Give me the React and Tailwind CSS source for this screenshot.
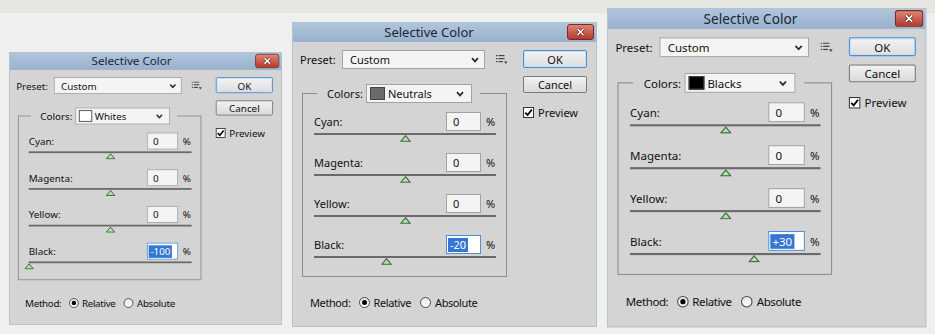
import React from "react";

function Chevron() {
  return (
    <svg width="8" height="6" viewBox="0 0 8 6">
      <path d="M1 1.2 L4 4.4 L7 1.2" fill="none" stroke="#2a2a2a" strokeWidth="1.7" />
    </svg>
  );
}

function ListIcon() {
  return (
    <svg width="12" height="10" viewBox="0 0 12 10">
      <rect x="0" y="0" width="1.5" height="1.2" fill="#444" />
      <rect x="0" y="3" width="1.5" height="1.2" fill="#444" />
      <rect x="0" y="6" width="1.5" height="1.2" fill="#444" />
      <rect x="2.5" y="0" width="6" height="1.2" fill="#444" />
      <rect x="2.5" y="3" width="6" height="1.2" fill="#444" />
      <rect x="2.5" y="6" width="4.5" height="1.2" fill="#444" />
      <path d="M8 6.5 L11.5 6.5 L9.75 9 Z" fill="#444" />
    </svg>
  );
}

function Thumb({ pct }) {
  return (
    <svg
      width="11"
      height="7"
      viewBox="0 0 11 7"
      className="absolute top-[2px]"
      style={{ left: `calc(${pct}% - 5.5px)` }}
    >
      <path d="M5.5 0.7 L10.2 6.3 L0.8 6.3 Z" fill="#b5e0ad" stroke="#3d6b3d" strokeWidth="1.1" />
    </svg>
  );
}

function Row({ label, value, selected }) {
  const num = parseInt(value, 10);
  const pct = (num + 100) / 2;
  return (
    <div className="h-[41px]">
      <div className="flex items-center h-[19px]">
        <span className="flex-1">{label}</span>
        {selected ? (
          <div className="w-[35px] h-[19px] border border-[#4f8fd6] bg-white flex items-center pl-[1px]">
            <span className="bg-[#3476d2] text-white px-[2px] leading-[14px]">{value}</span>
          </div>
        ) : (
          <div className="w-[35px] h-[19px] border border-[#a3a3a3] bg-[#f4f4f4] flex items-center pl-[6px]">
            {value}
          </div>
        )}
        <span className="ml-[5px] w-[10px]">%</span>
      </div>
      <div className="relative mt-[2px] h-[2px] bg-[#6a6a6a]">
        <Thumb pct={pct} />
      </div>
    </div>
  );
}

function Radio({ checked }) {
  return (
    <span className="w-[11px] h-[11px] rounded-full border border-[#4a4a4a] bg-gradient-to-b from-[#e6e6e6] to-white flex items-center justify-center">
      {checked ? <span className="w-[5px] h-[5px] rounded-full bg-black" /> : null}
    </span>
  );
}

function Dialog({ pos, swatch, colorName, black }) {
  return (
    <div
      className={`absolute ${pos} origin-top-left w-[305px] h-[305px] flex flex-col border border-[#b3c2d3] bg-[#d4d4d4] font-['Noto_Sans',sans-serif] text-[11px] text-[#111111] leading-none`}
    >
      <div className="relative h-[19px] shrink-0 bg-gradient-to-b from-[#b1c5dc] to-[#98b1cd] flex items-center">
        <div className="w-[272px] text-center text-[13px] text-[#1c2633]">Selective Color</div>
        <div className="absolute right-[2px] top-[1px] w-[27px] h-[16px] rounded-[3px] border border-[#7c2a20] bg-gradient-to-b from-[#de8474] to-[#b33a2a] flex items-center justify-center">
          <svg width="9" height="8" viewBox="0 0 9 8">
            <path d="M1.5 1 L7.5 7 M7.5 1 L1.5 7" stroke="#5a1a12" strokeWidth="3" />
            <path d="M1.5 1 L7.5 7 M7.5 1 L1.5 7" stroke="#ffffff" strokeWidth="1.7" />
          </svg>
        </div>
      </div>

      <div className="flex pl-[7px]">
        <div className="w-[223px] flex flex-col">
          <div className="mt-[8px] h-[19px] flex items-center">
            <span className="w-[42px]">Preset:</span>
            <div className="w-[143px] h-[19px] border border-[#a3a3a3] bg-[#f4f4f4] flex items-center pl-[7px] pr-[5px]">
              <span className="flex-1">Custom</span>
              <Chevron />
            </div>
            <span className="ml-[11px] flex items-center">
              <ListIcon />
            </span>
          </div>

          <fieldset className="mt-[15px] ml-[2px] w-[205px] border border-[#8c8c8c] pl-[11px] pr-[10px] pt-[9px] pb-0">
            <legend className="ml-[3px] pl-[10px] pr-[8px] h-[19px]">
              <div className="flex items-center h-[19px]">
                <span>Colors:</span>
                <div className="ml-[3px] w-[106px] h-[19px] border border-[#a3a3a3] bg-[#f4f4f4] flex items-center pl-[3px] pr-[7px]">
                  <span className={`w-[15px] h-[13px] border border-[#444] ${swatch}`} />
                  <span className="ml-[3px] flex-1">{colorName}</span>
                  <Chevron />
                </div>
              </div>
            </legend>
            <Row label="Cyan:" value="0" />
            <Row label="Magenta:" value="0" />
            <Row label="Yellow:" value="0" />
            <Row label="Black:" value={black} selected />
          </fieldset>

          <div className="mt-[17px] h-[16px] pl-[10px] flex items-center tracking-[-0.4px]">
            <span>Method:</span>
            <span className="ml-[8px]">
              <Radio checked />
            </span>
            <span className="ml-[4px]">Relative</span>
            <span className="ml-[9px]">
              <Radio />
            </span>
            <span className="ml-[4px]">Absolute</span>
          </div>
        </div>

        <div className="w-[64px] flex flex-col">
          <div className="mt-[8px] h-[18px] rounded-[2px] border border-[#4f8fcf] bg-gradient-to-b from-[#f3f3f3] to-[#dedede] shadow-[inset_0_0_0_1px_#bfe0f5] flex items-center justify-center">
            OK
          </div>
          <div className="mt-[8px] h-[17px] rounded-[2px] border border-[#7a7a7a] bg-gradient-to-b from-[#f2f2f2] to-[#dadada] flex items-center justify-center">
            Cancel
          </div>
          <div className="mt-[14px] h-[11px] flex items-center">
            <span className="w-[11px] h-[11px] border border-[#333] bg-white flex items-center justify-center">
              <svg width="9" height="9" viewBox="0 0 9 9">
                <path d="M1.3 4.6 L3.6 7 L7.8 1.6" fill="none" stroke="#000" strokeWidth="1.8" />
              </svg>
            </span>
            <span className="ml-[4px]">Preview</span>
          </div>
        </div>
      </div>
    </div>
  );
}

export default function App() {
  return (
    <div className="relative w-[935px] h-[334px] bg-[#efefed] overflow-hidden">
      <div className="h-[13px] bg-[#e6e6e1]" />
      <Dialog pos="left-[9px] top-[52px] scale-[0.895]" swatch="bg-white" colorName="Whites" black="-100" />
      <Dialog pos="left-[292px] top-[22px]" swatch="bg-[#6b6b6b]" colorName="Neutrals" black="-20" />
      <Dialog pos="left-[607px] top-[8px] scale-[1.047]" swatch="bg-black" colorName="Blacks" black="+30" />
    </div>
  );
}
